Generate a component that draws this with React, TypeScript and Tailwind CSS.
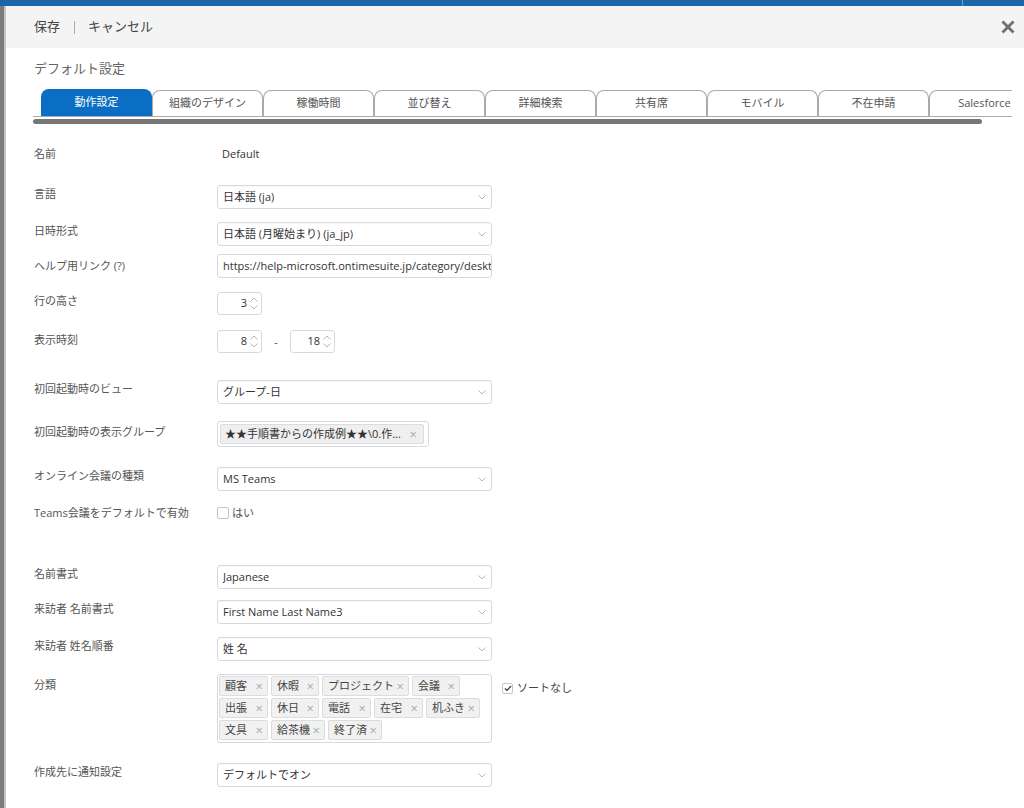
import React from "react";

const Chevron = () => (
  <svg width="8" height="5" viewBox="0 0 8 5" className="shrink-0">
    <polyline points="0.5,0.5 4,4 7.5,0.5" fill="none" stroke="#b5b5b5" strokeWidth="1" />
  </svg>
);

const Select = ({ value }: { value: string }) => (
  <div className="w-[275px] h-[24px] border border-[#d6dae0] rounded-[3px] pl-[5px] pr-[5px] flex items-center justify-between text-[11px] text-[#333] bg-white shadow-[inset_0_1px_1px_rgba(0,0,0,0.03)]">
    <span className="whitespace-nowrap overflow-hidden">{value}</span>
    <Chevron />
  </div>
);

const Spinner = ({ value }: { value: string }) => (
  <div className="w-[45px] h-[23px] border border-[#d6dae0] rounded-[3px] flex items-center justify-end pr-[3px] text-[11px] text-[#333] bg-white">
    <span className="mr-[3px]">{value}</span>
    <div className="flex flex-col gap-[3px]">
      <svg width="8" height="5" viewBox="0 0 8 5">
        <polyline points="0.5,4.5 4,1 7.5,4.5" fill="none" stroke="#b5b5b5" strokeWidth="1" />
      </svg>
      <svg width="8" height="5" viewBox="0 0 8 5">
        <polyline points="0.5,0.5 4,4 7.5,0.5" fill="none" stroke="#b5b5b5" strokeWidth="1" />
      </svg>
    </div>
  </div>
);

const Label = ({ children }: { children: React.ReactNode }) => (
  <div className="w-[183px] shrink-0 text-[11px] leading-[16px] text-[#555] mt-[1px] whitespace-nowrap">{children}</div>
);

const Chip = ({ text, w }: { text: string; w: string }) => (
  <div className={`${w} h-[20px] bg-[#f1f1f1] border border-[#dcdcdc] rounded-[2px] pl-[5px] pr-[4px] flex items-center justify-between text-[11px] text-[#444]`}>
    <span className="whitespace-nowrap">{text}</span>
    <span className="text-[#aaa] text-[13px] leading-none">×</span>
  </div>
);

const tabs = ["組織のデザイン", "稼働時間", "並び替え", "詳細検索", "共有席", "モバイル", "不在申請", "Salesforce"];

export default function App() {
  return (
    <div className="w-[1024px] h-[808px] overflow-hidden flex flex-col font-['Open_Sans','Noto_Sans_CJK_JP',sans-serif]">
      <div className="h-[6px] bg-[#1f66a8] flex shrink-0">
        <div className="w-[962px]" />
        <div className="w-[1px] bg-[#6f9cc8]" />
      </div>
      <div className="flex-1 flex">
        <div className="w-[4px] bg-[#7c7c7c]" />
        <div className="w-[2px] bg-[#c4c4c4]" />
        <div className="flex-1 bg-white flex flex-col">
          <div className="h-[42px] bg-[#f4f4f4] flex items-center pl-[28px] pr-[9px] text-[13px] text-[#444] shrink-0">
            <span>保存</span>
            <span className="ml-[14px] mr-[13px] w-[1px] h-[13px] bg-[#aaa]" />
            <span>キャンセル</span>
            <div className="flex-1" />
            <svg width="14" height="14" viewBox="0 0 14 14">
              <line x1="1.5" y1="1.5" x2="12.5" y2="12.5" stroke="#707070" strokeWidth="2.8" />
              <line x1="12.5" y1="1.5" x2="1.5" y2="12.5" stroke="#707070" strokeWidth="2.8" />
            </svg>
          </div>

          <div className="mt-[12px] pl-[28px] text-[13px] leading-[16px] text-[#666]">デフォルト設定</div>

          <div className="mt-[13px] ml-[27px] w-[979px] overflow-hidden border-b border-[#aaa] flex pl-[8px] h-[28px] items-end">
            <div className="w-[111px] shrink-0 h-[27px] bg-[#0a6fc4] rounded-t-[8px] flex items-center justify-center text-[11px] text-white">動作設定</div>
            {tabs.map((t) => (
              <div key={t} className="w-[111px] shrink-0 h-[26px] bg-white border-t border-l border-r border-[#aaa] rounded-t-[8px] flex items-center justify-center text-[11px] text-[#555]">
                {t}
              </div>
            ))}
          </div>
          <div className="mt-[2px] ml-[27px] w-[949px] h-[5px] rounded-full bg-[#777]" />

          <div className="mt-[21px] pl-[28px] flex flex-col">
            <div className="h-[40px] flex items-start">
              <Label>名前</Label>
              <div className="text-[11px] leading-[16px] text-[#333] mt-[1px] pl-[5px]">Default</div>
            </div>
            <div className="h-[37px] flex items-start">
              <Label>言語</Label>
              <Select value="日本語 (ja)" />
            </div>
            <div className="h-[32px] flex items-start">
              <Label>日時形式</Label>
              <Select value="日本語 (月曜始まり) (ja_jp)" />
            </div>
            <div className="h-[38px] flex items-start">
              <div className="mt-[3px]"><Label>ヘルプ用リンク (?)</Label></div>
              <div className="w-[275px] h-[24px] border border-[#d6dae0] rounded-[3px] pl-[5px] flex items-center text-[11px] text-[#333] overflow-hidden whitespace-nowrap">
                https://help-microsoft.ontimesuite.jp/category/desktop
              </div>
            </div>
            <div className="h-[38px] flex items-start">
              <Label>行の高さ</Label>
              <Spinner value="3" />
            </div>
            <div className="h-[50px] flex items-start">
              <div className="mt-[1px]"><Label>表示時刻</Label></div>
              <Spinner value="8" />
              <span className="w-[28px] text-center text-[11px] leading-[23px] text-[#555]">-</span>
              <Spinner value="18" />
            </div>
            <div className="h-[41px] flex items-start">
              <Label>初回起動時のビュー</Label>
              <Select value="グループ-日" />
            </div>
            <div className="h-[46px] flex items-start">
              <div className="mt-[2px]"><Label>初回起動時の表示グループ</Label></div>
              <div className="w-[212px] h-[26px] border border-[#d6dae0] rounded-[3px] pl-[2px] pt-[2px]">
                <div className="w-[204px] h-[20px] bg-[#efefef] border border-[#dcdcdc] rounded-[2px] pl-[4px] pr-[6px] flex items-center justify-between text-[11px] text-[#333]">
                  <span className="whitespace-nowrap">{"★★手順書からの作成例★★\\0.作..."}</span>
                  <span className="text-[#aaa] text-[13px] leading-none">×</span>
                </div>
              </div>
            </div>
            <div className="h-[40px] flex items-start">
              <Label>オンライン会議の種類</Label>
              <Select value="MS Teams" />
            </div>
            <div className="h-[58px] flex items-start">
              <div className="-mt-[3px]"><Label>Teams会議をデフォルトで有効</Label></div>
              <div className="flex items-center gap-[3px]">
                <div className="w-[12px] h-[12px] border border-[#c4c4c4] rounded-[2px] bg-white" />
                <span className="text-[11px] leading-[12px] text-[#555]">はい</span>
              </div>
            </div>
            <div className="h-[35px] flex items-start">
              <Label>名前書式</Label>
              <Select value="Japanese" />
            </div>
            <div className="h-[37px] flex items-start">
              <Label>来訪者 名前書式</Label>
              <Select value="First Name Last Name3" />
            </div>
            <div className="h-[37px] flex items-start">
              <Label>来訪者 姓名順番</Label>
              <Select value="姓 名" />
            </div>
            <div className="h-[89px] flex items-start">
              <div className="mt-[2px]"><Label>分類</Label></div>
              <div className="w-[275px] h-[69px] border border-[#d6dae0] rounded-[3px] pl-[1px] pt-[1px] flex flex-col gap-[2px]">
                <div className="flex gap-[3px]">
                  <Chip text="顧客" w="w-[49px]" />
                  <Chip text="休暇" w="w-[48px]" />
                  <Chip text="プロジェクト" w="w-[87px]" />
                  <Chip text="会議" w="w-[48px]" />
                </div>
                <div className="flex gap-[3px]">
                  <Chip text="出張" w="w-[49px]" />
                  <Chip text="休日" w="w-[48px]" />
                  <Chip text="電話" w="w-[49px]" />
                  <Chip text="在宅" w="w-[49px]" />
                  <Chip text="机ふき" w="w-[54px]" />
                </div>
                <div className="flex gap-[3px]">
                  <Chip text="文具" w="w-[49px]" />
                  <Chip text="給茶機" w="w-[54px]" />
                  <Chip text="終了済" w="w-[54px]" />
                </div>
              </div>
              <div className="ml-[10px] mt-[8px] flex items-center gap-[4px]">
                <div className="w-[11px] h-[11px] border border-[#c4c4c4] rounded-[2px] bg-white flex items-center justify-center">
                  <svg width="8" height="7" viewBox="0 0 8 7">
                    <polyline points="1,3.5 3,5.5 7,1" fill="none" stroke="#333" strokeWidth="1.2" />
                  </svg>
                </div>
                <span className="text-[11px] leading-[12px] text-[#444]">ソートなし</span>
              </div>
            </div>
            <div className="h-[40px] flex items-start">
              <Label>作成先に通知設定</Label>
              <Select value="デフォルトでオン" />
            </div>
          </div>
        </div>
      </div>
    </div>
  );
}
